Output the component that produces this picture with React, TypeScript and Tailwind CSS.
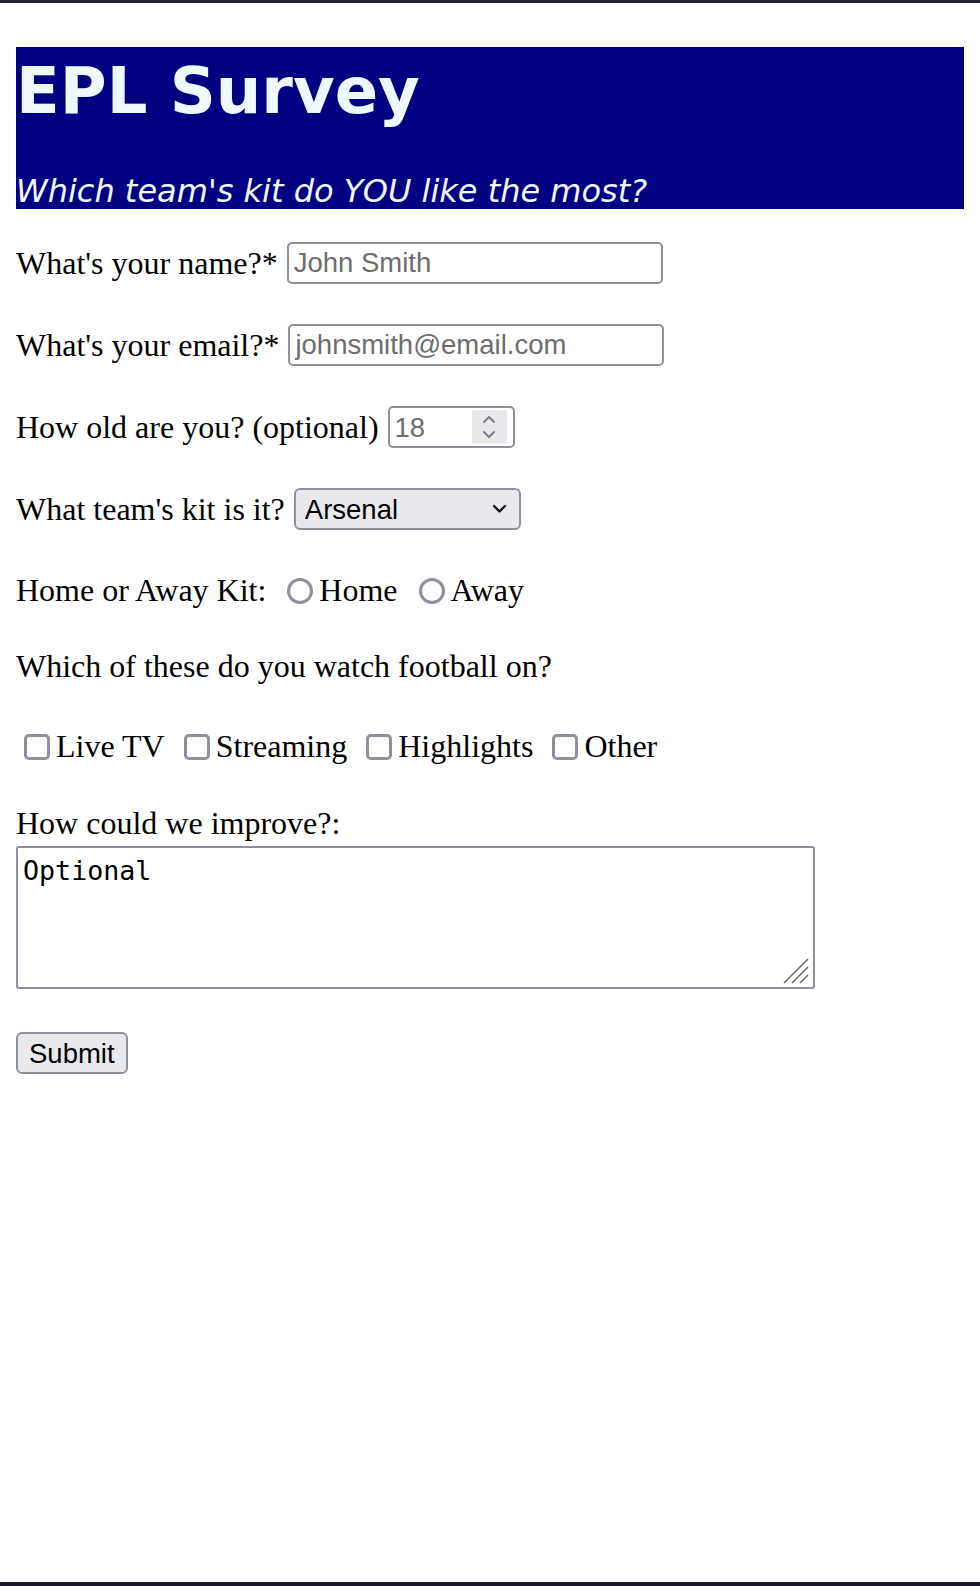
import React from 'react';

const serif = "font-['Liberation_Serif','Times_New_Roman',serif]";
const sans = "font-['Liberation_Sans',Arial,sans-serif]";

const fieldBox =
  "h-[42px] border-2 border-[#8f8f9d] rounded-[5px] bg-white text-[27.5px] text-black outline-none placeholder:text-[#6d6d6d] " +
  sans;

const App: React.FC = () => {
  return (
    <div className={`h-[1586px] flex flex-col bg-white text-black ${serif}`}>
      <div className="h-[3px] bg-[#23232f]" />
      <div className="flex-1 flex flex-col px-4 pt-[44px]">
        {/* banner */}
        <header className="h-[162px] bg-[#000080] text-[#f0f8ff] font-['DejaVu_Sans',Verdana,sans-serif] pt-[7px]">
          <h1 className="text-[64px] leading-[normal] font-bold mb-[44px]">EPL Survey</h1>
          <p className="text-[32px] leading-[normal] italic">Which team's kit do YOU like the most?</p>
        </header>

        <form className="flex flex-col text-[32px] leading-[37px]" onSubmit={(e) => e.preventDefault()}>
          <div className="mt-[33px] h-[42px] flex items-center gap-[9px]">
            <label htmlFor="name">What's your name?*</label>
            <input id="name" type="text" placeholder="John Smith" className={`w-[376px] pl-[5px] ${fieldBox}`} />
          </div>

          <div className="mt-[40px] h-[42px] flex items-center gap-[9px]">
            <label htmlFor="email">What's your email?*</label>
            <input id="email" type="email" placeholder="johnsmith@email.com" className={`w-[376px] pl-[5px] ${fieldBox}`} />
          </div>

          <div className="mt-[40px] h-[42px] flex items-center gap-[9px]">
            <label htmlFor="age">How old are you? (optional)</label>
            <div className="w-[127px] h-[42px] flex items-stretch border-2 border-[#8f8f9d] rounded-[5px] bg-white p-[2px] pl-0">
              <input
                id="age"
                type="text"
                placeholder="18"
                className={`min-w-0 flex-1 pl-[5px] text-[27.5px] text-black outline-none bg-transparent placeholder:text-[#6d6d6d] ${sans}`}
              />
              <div className="w-[35px] mr-[4px] bg-[#e9e9ed] flex items-center justify-center">
                <svg width="16" height="30" viewBox="0 0 16 30" fill="none" stroke="#7c7c84" strokeWidth="2" strokeLinecap="round" strokeLinejoin="round">
                  <polyline points="3,10 8,5 13,10" />
                  <polyline points="3,20 8,25 13,20" />
                </svg>
              </div>
            </div>
          </div>

          <div className="mt-[40px] h-[42px] flex items-center gap-[9px]">
            <label htmlFor="team">What team's kit is it?</label>
            <div className="relative">
              <select
                id="team"
                defaultValue="arsenal"
                className={`appearance-none w-[227px] h-[42px] pl-[9px] border-2 border-[#8f8f9d] rounded-[6px] bg-[#e9e9ed] text-[27.5px] text-black outline-none ${sans}`}
              >
                <option value="arsenal">Arsenal</option>
                <option value="chelsea">Chelsea</option>
                <option value="liverpool">Liverpool</option>
                <option value="mancity">Man City</option>
                <option value="manutd">Man United</option>
                <option value="spurs">Tottenham</option>
              </select>
              <svg
                className="absolute right-[14px] top-[16px] pointer-events-none"
                width="15"
                height="10"
                viewBox="0 0 15 10"
                fill="none"
                stroke="#111"
                strokeWidth="2.4"
                strokeLinecap="round"
                strokeLinejoin="round"
              >
                <polyline points="2,2 7.5,7.5 13,2" />
              </svg>
            </div>
          </div>

          <div className="mt-[42px] h-[37px] flex items-center gap-[11px]">
            <span>Home or Away Kit:</span>
            <label className="flex items-center">
              <input type="radio" name="kit" value="home" className="appearance-none ml-[10px] mr-[6px] w-[26px] h-[26px] rounded-full border-[3px] border-[#8f8f9d] bg-white" />
              Home
            </label>
            <label className="flex items-center">
              <input type="radio" name="kit" value="away" className="appearance-none ml-[10px] mr-[6px] w-[26px] h-[26px] rounded-full border-[3px] border-[#8f8f9d] bg-white" />
              Away
            </label>
          </div>

          <p className="mt-[39px]">Which of these do you watch football on?</p>

          <div className="mt-[43px] h-[37px] flex items-center gap-[11px]">
            {['Live TV', 'Streaming', 'Highlights', 'Other'].map((item) => (
              <label key={item} className="flex items-center">
                <input type="checkbox" value={item} className="appearance-none ml-[8px] mr-[6px] w-[26px] h-[26px] rounded-[5px] border-[3px] border-[#8f8f9d] bg-white" />
                {item}
              </label>
            ))}
          </div>

          <label htmlFor="improve" className="mt-[40px]">How could we improve?:</label>
          <div className="relative mt-[4px] w-[799px]">
            <textarea
              id="improve"
              placeholder="Optional"
              className="block w-[799px] h-[143px] resize-none border-2 border-[#8f8f9d] rounded-[3px] p-[5px] pt-[7px] text-[26.67px] leading-[normal] text-black outline-none placeholder:text-black font-['DejaVu_Sans_Mono',monospace]"
            />
            <svg className="absolute right-[6px] bottom-[5px] pointer-events-none" width="26" height="26" viewBox="0 0 26 26" stroke="#6e6e76" strokeWidth="1.6">
              <line x1="25" y1="1" x2="1" y2="25" />
              <line x1="25" y1="9" x2="9" y2="25" />
              <line x1="25" y1="17" x2="17" y2="25" />
            </svg>
          </div>

          <div className="mt-[43px]">
            <button
              type="submit"
              className={`h-[42px] px-[11px] border-2 border-[#8f8f9d] rounded-[6px] bg-[#e9e9ed] text-[27.5px] text-black ${sans}`}
            >
              Submit
            </button>
          </div>
        </form>
      </div>
      <div className="h-[4px] bg-[#1c1c2e]" />
    </div>
  );
};

export default App;
